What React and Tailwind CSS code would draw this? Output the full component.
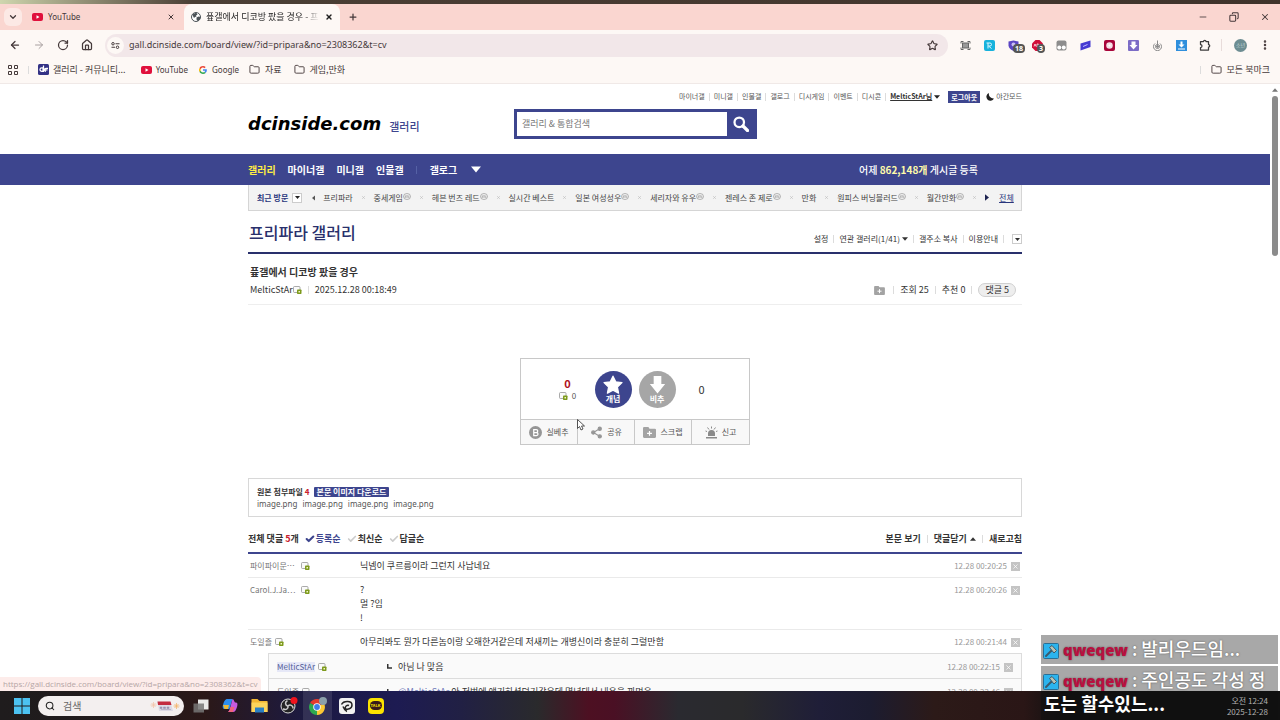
import { Fragment } from 'react';
import {
  ArrowLeft,
  ArrowRight,
  Check,
  ChevronDown,
  Copy,
  EllipsisVertical,
  Folder,
  House,
  Minus,
  Plus,
  RotateCw,
  Search,
  Share2,
  Star,
  X,
} from 'lucide-react';

const utilLinks = ['마이너갤', '미니갤', '인물갤', '갤로그', '디시게임', '이벤트', '디시콘'];

const visited = [
  { name: '프리파라' },
  { name: '중세게임', minor: true },
  { name: '헤븐 번즈 레드', minor: true },
  { name: '실시간 베스트' },
  { name: '일본 여성성우', minor: true },
  { name: '세리자와 유우', minor: true },
  { name: '젠레스 존 제로', minor: true },
  { name: '만화' },
  { name: '원피스 버닝블러드', minor: true },
  { name: '월간만화', minor: true },
];

const comments = [
  { name: '파이파이문⋯', lines: ['닉넴이 쿠르릉이라 그런지 사납네요'], date: '12.28 00:20:25' },
  { name: 'Carol.J.Ja⋯', lines: ['?', '멀 ?임', '!'], date: '12.28 00:20:26' },
  {
    name: '도일즐',
    lines: ['아무리봐도 뭔가 다른놈이랑 오해한거같은데 저새끼는 개병신이라 충분히 그럴만함'],
    date: '12.28 00:21:44',
  },
];

const replies = [
  { name: 'MelticStAr', mine: true, text: '아님 나 맞음', date: '12.28 00:22:15' },
  {
    name: '도일즐',
    mention: '@MelticStAr',
    text: '아 저번에 얘기하셨던거같은데 몇년대서 내용을 까먹음',
    date: '12.28 00:22:46',
  },
];

const YoutubeIcon = () => (
  <svg viewBox="0 0 22 16" className="w-[11px] h-2 shrink-0">
    <rect width="22" height="16" rx="4" fill="#e0103c" />
    <path d="M9 4.5v7l6-3.5z" fill="#fff" />
  </svg>
);

const GlobeIcon = () => (
  <svg viewBox="0 0 20 20" className="w-[10px] h-[10px] shrink-0">
    <circle cx="10" cy="10" r="9" fill="#fff" stroke="#4b5256" strokeWidth="2" />
    <path d="M3 6c2-3 5-4 8-4l2 3-3 2 1 2-3 1-2 2zM11 11l4-2 4 1c0 4-3 7-6 8l-2-3z" fill="#4b5256" />
  </svg>
);

const GoogleIcon = () => (
  <svg viewBox="0 0 48 48" className="w-2 h-2 shrink-0">
    <path fill="#ea4335" d="M24 9.5c3.5 0 6.700 1.200 9.200 3.600l6.900-6.900C35.900 2.400 30.500 0 24 0 14.600 0 6.500 5.400 2.600 13.200l8 6.200C12.400 13.700 17.700 9.500 24 9.500z" />
    <path fill="#4285f4" d="M47 24.500c0-1.600-.2-3.100-.4-4.500H24v9h12.900c-.6 3-2.300 5.500-4.800 7.200l7.700 6C44.400 38 47 31.800 47 24.500z" />
    <path fill="#fbbc05" d="M10.500 28.600a14.500 14.500 0 0 1 0-9.200l-8-6.200a24 24 0 0 0 0 21.600z" />
    <path fill="#34a853" d="M24 48c6.500 0 11.900-2.100 15.900-5.800l-7.700-6c-2.200 1.500-4.900 2.300-8.200 2.300-6.300 0-11.600-4.200-13.500-9.900l-8 6.200C6.500 42.600 14.600 48 24 48z" />
  </svg>
);

// grey bubble with the small green badge next to member names
const MemberIcon = () => (
  <svg viewBox="0 0 18 16" className="w-[9px] h-2 shrink-0">
    <rect x="1" y="1" width="13" height="12" rx="2" fill="#fafafa" stroke="#8f8f8f" strokeWidth="1.500" />
    <rect x="8" y="7" width="9" height="9" rx="1.500" fill="#7d9a1c" />
    <rect x="11" y="10" width="3" height="3" fill="#f2f6c8" />
  </svg>
);

const FolderPlusIcon = ({ className }) => (
  <svg viewBox="0 0 24 20" className={className}>
    <path d="M2 0h8l2 3h10a2 2 0 0 1 2 2v13a2 2 0 0 1-2 2H2a2 2 0 0 1-2-2V2a2 2 0 0 1 2-2z" fill="#a3a3a3" />
    <path d="M12 7v9M7.500 11.500h9" stroke="#fff" strokeWidth="2.200" />
  </svg>
);

const Triangle = ({ className, d }) => (
  <svg viewBox="0 0 10 6" className={className} fill="currentColor">
    <path d={d || 'M0 0h10L5 6z'} />
  </svg>
);

const Bar = ({ className = 'mx-1' }) => <span className={`w-px h-2 bg-[#dcdcdc] shrink-0 ${className}`} />;

const Extensions = () => (
  <div className="flex items-center">
    <button className="w-6 flex justify-center" aria-label="Capture">
      <svg viewBox="0 0 22 22" className="w-[11px] h-[11px]" fill="none" stroke="#666" strokeWidth="2">
        <path d="M2 7V3h5M15 3h5v4M2 15v4h5M15 19h5v-4" />
        <rect x="5" y="6" width="12" height="10" fill="#999" />
      </svg>
    </button>
    <button className="w-6 flex justify-center" aria-label="Ridi">
      <svg viewBox="0 0 22 22" className="w-[11px] h-[11px]">
        <rect width="22" height="22" rx="4" fill="#17b2dc" />
        <path d="M8 17V6h4a3 3 0 0 1 0 6H9l6 5M5 6h3" stroke="#d9f6ff" strokeWidth="2" fill="none" />
      </svg>
    </button>
    <button className="w-6 flex justify-center relative" aria-label="Shield">
      <svg viewBox="0 0 22 22" className="w-[11px] h-[11px]">
        <path d="M1 3l10-2 10 2v8c0 5-5 9-10 11C6 20 1 16 1 11z" fill="#5b45c4" />
        <circle cx="11" cy="9" r="4" fill="#c9bff5" />
      </svg>
      <span className="absolute left-3 top-1 px-0.5 rounded-sm bg-[#555] text-white font-bold text-[7px] leading-[9px]">18</span>
    </button>
    <button className="w-6 flex justify-center relative" aria-label="Ad block">
      <svg viewBox="0 0 22 22" className="w-[11px] h-[11px]">
        <path d="M7 0h8l7 7v8l-7 7H7l-7-7V7z" fill="#d0103a" />
        <path d="M4 13l2-5 2 5M10 8v6h2a1.500 1.500 0 0 0 0-3 1.500 1.500 0 0 0 0-3zM18 9h-2v4h2" stroke="#fff" strokeWidth="1.500" fill="none" />
      </svg>
      <span className="absolute left-3 top-1 px-0.5 rounded-sm bg-[#555] text-white font-bold text-[7px] leading-[9px]">3</span>
    </button>
    <button className="w-6 flex justify-center" aria-label="Tampermonkey">
      <svg viewBox="0 0 22 22" className="w-[11px] h-[11px]">
        <rect x="1" y="1" width="20" height="20" rx="4" fill="#8d8d8d" />
        <circle cx="6.500" cy="15" r="4" fill="#fff" />
        <circle cx="15.500" cy="15" r="4" fill="#fff" />
      </svg>
    </button>
    <button className="w-6 flex justify-center" aria-label="Note">
      <svg viewBox="0 0 22 22" className="w-[11px] h-[11px]">
        <path d="M1 7l20-6v13L1 21z" fill="#473bd2" />
        <path d="M6 13l9-4" stroke="#c4bfff" strokeWidth="2" />
      </svg>
    </button>
    <button className="w-6 flex justify-center" aria-label="Record">
      <svg viewBox="0 0 22 22" className="w-[11px] h-[11px]">
        <rect width="22" height="22" rx="4" fill="#a8063a" />
        <circle cx="11" cy="11" r="6.500" fill="#f6dfe6" />
        <circle cx="11" cy="11" r="2" fill="#fff" />
      </svg>
    </button>
    <button className="w-6 flex justify-center" aria-label="Download">
      <svg viewBox="0 0 22 22" className="w-[11px] h-[11px]">
        <rect width="22" height="22" rx="2" fill="#7c6cc6" />
        <path d="M7 3h8v7h4l-8 9-8-9h4z" fill="#fff" />
      </svg>
    </button>
    <button className="w-6 flex justify-center" aria-label="Save">
      <svg viewBox="0 0 22 22" className="w-[11px] h-[11px]" fill="none" stroke="#8a8a8a" strokeWidth="2">
        <path d="M11 1v14M7 11l4 4 4-4M6 7a8 8 0 1 0 10 0" />
        <circle cx="11" cy="13" r="4" />
      </svg>
    </button>
    <button className="w-6 flex justify-center" aria-label="Image downloader">
      <svg viewBox="0 0 22 22" className="w-[11px] h-[11px]">
        <rect width="22" height="22" fill="#2f8fdc" />
        <path d="M9 3h4v6h4l-6 6-6-6h4zM4 17h14v2H4z" fill="#fff" />
      </svg>
    </button>
    <button className="w-6 flex justify-center" aria-label="Extensions">
      <svg viewBox="0 0 24 24" className="w-3 h-3" fill="none" stroke="#3c3c3c" strokeWidth="2.500" strokeLinejoin="round">
        <path d="M3 5h6a2.500 2.500 0 0 1 5 0h5v6a2.500 2.500 0 0 1 0 5v6H3v-5a3 3 0 0 0 0-6z" />
      </svg>
    </button>
  </div>
);

const Browser = () => (
  <header className="shrink-0 font-['Noto_Sans','Noto_Sans_CJK_KR',sans-serif] text-[#45393a]">
    <div className="h-1 bg-linear-to-r from-[#cfd6ae] via-[#4b3f35] via-[15%] to-[#3f332b]" />
    <div className="h-[26px] bg-[#fad6d0] flex items-center pl-1">
      <button className="w-[18px] h-[18px] rounded-md bg-[#fce9e5] flex items-center justify-center" aria-label="Tabs">
        <ChevronDown className="w-2.5 h-2.5" strokeWidth={3} />
      </button>
      <div className="w-[162px] pl-2.5 pr-[9px] flex items-center gap-[5px] text-[8px]">
        <YoutubeIcon />
        <span className="flex-1">YouTube</span>
        <button aria-label="Close tab"><X className="w-2 h-2" strokeWidth={3} /></button>
      </div>
      <div className="w-[156px] h-full pl-[7px] pr-[7px] flex items-center gap-[5px] text-[9px] rounded-t-lg bg-[#fdf8f5] text-[#1f1f1f]">
        <GlobeIcon />
        <span className="flex-1 overflow-hidden whitespace-nowrap font-['Noto_Sans_CJK_KR',sans-serif] mask-r-from-85%">픂갤에서 디코방 팠을 경우 - 프</span>
        <button aria-label="Close tab"><X className="w-2 h-2" strokeWidth={4} /></button>
      </div>
      <button className="ml-2 w-2.5" aria-label="New tab"><Plus className="w-2.5 h-2.5" strokeWidth={3} /></button>
      <div className="ml-auto flex items-center gap-[21px] pr-2.5">
        <button aria-label="Minimize"><Minus className="w-2.5 h-2.5" /></button>
        <button aria-label="Restore"><Copy className="w-2.5 h-2.5 -scale-x-100" strokeWidth={2.5} /></button>
        <button aria-label="Close"><X className="w-2.5 h-2.5" strokeWidth={2.5} /></button>
      </div>
    </div>
    <div className="h-[30px] bg-[#fdf8f5] flex items-center pl-[9px] pr-[9px]">
      <div className="flex items-center gap-3">
        <button aria-label="Back"><ArrowLeft className="w-3 h-3" strokeWidth={2.5} /></button>
        <button aria-label="Forward"><ArrowRight className="w-3 h-3 text-[#a8a0a0]" /></button>
        <button aria-label="Reload"><RotateCw className="w-3 h-3" strokeWidth={2.5} /></button>
        <button aria-label="Home"><House className="w-3 h-3" strokeWidth={2.5} /></button>
      </div>
      <label className="ml-3 flex-1 h-[23px] rounded-full bg-[#f2e7e9] flex items-center pl-0.5 pr-2.5">
        <span className="w-[17px] h-[17px] rounded-full bg-[#fdf8f5] flex items-center justify-center">
          <svg viewBox="0 0 18 14" className="w-[9px] h-[7px]" fill="none" stroke="#453a3b" strokeWidth="2">
            <circle cx="4" cy="3.500" r="2.500" />
            <path d="M9 3.500h8M1 10.500h7" />
            <circle cx="13" cy="10.500" r="2.500" />
          </svg>
        </span>
        <input
          aria-label="Address"
          className="ml-[5px] flex-1 min-w-0 bg-transparent text-[9px] outline-none"
          defaultValue="gall.dcinside.com/board/view/?id=pripara&no=2308362&t=cv"
        />
        <Star className="w-[11px] h-[11px]" strokeWidth={2.5} />
      </label>
      <div className="ml-[5px] flex items-center">
        <Extensions />
        <span className="ml-1 mr-3 w-px h-3 bg-[#e8dcda]" />
        <span className="w-[13px] h-[13px] rounded-full bg-[#6d8d92] text-[#c3d8da] text-[5px] leading-[13px] text-center">소년</span>
        <EllipsisVertical className="ml-3 w-3 h-3" strokeWidth={3} />
      </div>
    </div>
    <nav className="h-6 bg-[#fdf8f5] border-b border-[#f0e9e7] flex items-center pl-2 pr-2.5 pb-1 text-[8px]">
      <svg viewBox="0 0 20 20" className="w-2.5 h-2.5" fill="none" stroke="#453a3b" strokeWidth="2">
        <path d="M1 1h6v6H1zM13 1h6v6h-6zM1 13h6v6H1zM13 13h6v6h-6z" />
      </svg>
      <Bar className="ml-2.5 mr-[9px]" />
      <a href="#" className="flex items-center gap-1 mr-[15px] font-['Noto_Sans_CJK_KR',sans-serif] text-[9px]">
        <svg viewBox="0 0 22 22" className="w-[11px] h-[11px]">
          <rect width="22" height="22" rx="3" fill="#333285" />
          <path d="M10 7.500H7.500a3.500 3.500 0 0 0 0 7H10zM11 3v13M20 8.500h-4a3 3 0 0 0 0 6M14 11.500h5" stroke="#fff" strokeWidth="2.500" fill="none" />
        </svg>
        갤러리 - 커뮤니티...
      </a>
      <a href="#" className="flex items-center gap-1 mr-[11px]"><YoutubeIcon />YouTube</a>
      <a href="#" className="flex items-center gap-[5px] mr-2.5"><GoogleIcon />Google</a>
      <a href="#" className="flex items-center gap-[5px] mr-3 font-['Noto_Sans_CJK_KR',sans-serif] text-[9px]"><Folder className="w-[11px] h-[11px]" />자료</a>
      <a href="#" className="flex items-center gap-[5px] font-['Noto_Sans_CJK_KR',sans-serif] text-[9px]"><Folder className="w-[11px] h-[11px]" />게임,만화</a>
      <Bar className="ml-auto mr-2.5" />
      <a href="#" className="flex items-center gap-[5px] font-['Noto_Sans_CJK_KR',sans-serif] text-[9px]"><Folder className="w-[11px] h-[11px]" />모든 북마크</a>
    </nav>
  </header>
);

const SiteHeader = () => (
  <>
    <div className="w-[774px] max-w-full mx-auto h-[70px]">
      <div className="h-[25px] flex items-center justify-end text-[7px] text-[#555]">
        {utilLinks.map((link) => (
          <Fragment key={link}>
            <a href="#">{link}</a>
            <Bar className="mx-1" />
          </Fragment>
        ))}
        <a href="#" className="font-bold underline text-[#333] text-[7px]">MelticStAr님</a>
        <Triangle className="ml-0.5 w-1.5 h-1 text-[#222]" />
        <button className="ml-2 w-8 h-3 bg-[#3d458e] text-white font-bold leading-3">로그아웃</button>
        <svg viewBox="0 0 16 16" className="ml-1.5 mr-0.5 w-2 h-2">
          <path d="M6 0a8 8 0 1 0 10 11A9 9 0 0 1 6 0z" fill="#222" />
        </svg>
        <a href="#">야간모드</a>
      </div>
      <div className="flex items-center">
        <h1 className="w-[266px] flex items-center gap-2">
          <a href="#" className="font-['DejaVu_Sans',sans-serif] font-bold italic text-[18px] leading-6 text-black">dcinside.com</a>
          <a href="#" className="mt-1 text-[11px] text-[#3d458e] font-medium">갤러리</a>
        </h1>
        <form className="w-[243px] h-[30px] flex border-[3px] border-[#3d458e] bg-[#3d458e]" onSubmit={(e) => e.preventDefault()}>
          <input
            type="text"
            aria-label="갤러리 & 통합검색"
            placeholder="갤러리 & 통합검색"
            className="flex-1 min-w-0 bg-white pl-[5px] text-[9px] placeholder:text-[#777] outline-none"
          />
          <button className="w-[27px] flex items-center justify-center text-white" aria-label="검색">
            <svg viewBox="0 0 32 32" className="w-4 h-4" fill="none" stroke="currentColor">
              <circle cx="12.500" cy="12.500" r="9.500" strokeWidth="4.500" />
              <path d="M20 20l9 9" strokeWidth="6.500" strokeLinecap="round" />
            </svg>
          </button>
        </form>
      </div>
    </div>
    <nav className="h-[31px] bg-[#3d458e]">
      <div className="w-[774px] max-w-full mx-auto h-full flex items-center text-[10px] font-bold text-white">
        <a href="#" className="text-[#ffed44] mr-3">갤러리</a>
        <a href="#" className="mr-3">마이너갤</a>
        <a href="#" className="mr-3">미니갤</a>
        <a href="#">인물갤</a>
        <span className="ml-3 mr-[13px] w-px h-2 bg-[#5561a5]" />
        <a href="#">갤로그</a>
        <button className="ml-3.5" aria-label="더보기"><Triangle className="w-2.5 h-[7px]" /></button>
        <p className="ml-auto mr-11 font-medium">
          어제 <b className="text-[#fffbaa]">862,148개</b> 게시글 등록
        </p>
      </div>
    </nav>
    <div className="w-[774px] max-w-full mx-auto h-[26px] flex items-center justify-between pl-2 pr-[7px] bg-[#f3f3f3] border border-t-0 border-[#d5d5d5] text-[8px] text-[#444] whitespace-nowrap">
      <div className="flex items-center">
        <b className="text-[#29367c]">최근 방문</b>
        <button className="ml-1 w-2.5 h-2.5 bg-white border border-[#ccc] flex items-center justify-center" aria-label="열기">
          <Triangle className="w-[5px] h-[3px] text-[#222]" />
        </button>
        <svg viewBox="0 0 6 10" className="w-[3px] h-[6px] ml-2.5"><path d="M6 0v10L0 5z" fill="#555" /></svg>
      </div>
      {visited.map((item) => (
        <Fragment key={item.name}>
          <a href="#" className="flex items-center">
            {item.name}
            {item.minor && (
              <svg viewBox="0 0 16 14" className="w-2 h-[7px] mb-0.5" fill="none" stroke="#888" strokeWidth="1.200">
                <ellipse cx="8" cy="7" rx="7" ry="6" />
                <path d="M4.500 10V5.500M4.500 6.500c1-1.500 3-1.500 3.500 0V10M8 6.500c1-1.500 3-1.500 3.500 0V10" />
              </svg>
            )}
          </a>
          <X className="w-[5px] h-[5px] text-[#aaa]" />
        </Fragment>
      ))}
      <div className="flex items-center gap-2.5">
        <svg viewBox="0 0 6 10" className="w-1 h-[7px]"><path d="M0 0v10l6-5z" fill="#1d2350" /></svg>
        <a href="#" className="underline text-[#29367c]">전체</a>
      </div>
    </div>
  </>
);

const VoteBox = () => (
  <section className="mt-[53px] mx-auto w-[230px] border border-[#c8c8c8]">
    <div className="h-[60px] flex items-center justify-center">
      <div className="w-[30px] text-center">
        <p className="text-[11px] leading-[14px] font-bold text-[#b0101c]">0</p>
        <p className="flex items-center justify-center gap-1 text-[8px] leading-3 text-[#555]"><MemberIcon />0</p>
      </div>
      <button className="ml-3 w-[37px] h-[37px] rounded-full bg-[#3d458e] text-white text-[8px] leading-[10px] font-bold flex flex-col items-center pt-1">
        <svg viewBox="0 0 24 22" className="w-5 h-[19px]" fill="#fff" stroke="#fff" strokeWidth="1.500" strokeLinejoin="round">
          <path d="M12 1l3.300 6.800 7.500 1-5.500 5.200 1.400 7.300L12 17.700 5.300 21.300 6.700 14 1.200 8.800l7.500-1z" />
        </svg>
        개념
      </button>
      <button className="ml-[7px] w-[37px] h-[37px] rounded-full bg-[#a6a6a6] text-white text-[8px] leading-[10px] font-bold flex flex-col items-center pt-1">
        <svg viewBox="0 0 20 22" className="w-[17px] h-[19px]" fill="#fff">
          <path d="M5.500 1h9v9.500H19L10 21.500 1 10.500h4.500z" />
        </svg>
        비추
      </button>
      <p className="ml-2.5 w-8 text-center text-[11px] text-[#333]">0</p>
    </div>
    <div className="h-[25px] border-t border-[#c8c8c8] bg-[#f8f8f8] grid grid-cols-4 divide-x divide-[#c8c8c8] text-[8px] text-[#555]">
      <button className="flex items-center justify-center gap-1">
        <svg viewBox="0 0 26 26" className="w-[13px] h-[13px]">
          <circle cx="13" cy="13" r="13" fill="#969696" />
          <path d="M9.500 7h5a3 3 0 0 1 0 6h-5zM9.500 13h5.500a3 3 0 0 1 0 6H9.500z" fill="none" stroke="#fff" strokeWidth="2.500" />
        </svg>
        실베추
      </button>
      <button className="flex items-center justify-center gap-1">
        <Share2 className="w-[13px] h-[13px] text-[#969696]" fill="currentColor" />
        공유
      </button>
      <button className="flex items-center justify-center gap-1">
        <FolderPlusIcon className="w-[13px] h-[11px]" />
        스크랩
      </button>
      <button className="flex items-center justify-center gap-1">
        <svg viewBox="0 0 26 26" className="w-[13px] h-[13px]" fill="#8a8a8a" stroke="#8a8a8a">
          <path d="M6 20v-5a7 7 0 0 1 14 0v5zM2 22h22v3H2z" stroke="none" />
          <path d="M13 1v4M5 3l3 4M21 3l-3 4M1 10l3 1M25 10l-3 1" fill="none" strokeWidth="2" />
        </svg>
        신고
      </button>
    </div>
  </section>
);

const DeleteButton = () => (
  <button className="ml-1 w-[9px] h-[9px] bg-[#c4c4c4] text-white flex items-center justify-center" aria-label="삭제">
    <X className="w-[7px] h-[7px]" strokeWidth={2.5} />
  </button>
);

const Comments = () => (
  <section className="mt-4">
    <div className="pb-[7px] flex items-center text-[9px] leading-3 font-bold text-[#333] border-b-2 border-[#3d458e]">
      <h3>전체 댓글 <span className="text-[#c8202c]">5</span>개</h3>
      <button className="ml-1.5 flex items-center text-[#3d458e]"><Check className="w-2.5 h-2.5 mr-px" strokeWidth={5} />등록순</button>
      <button className="ml-1.5 flex items-center"><Check className="w-2.5 h-2.5 mr-px text-[#ccc]" strokeWidth={4} />최신순</button>
      <button className="ml-1.5 flex items-center"><Check className="w-2.5 h-2.5 mr-px text-[#ccc]" strokeWidth={4} />답글순</button>
      <a href="#" className="ml-auto">본문 보기</a>
      <Bar className="mx-1.5" />
      <button className="flex items-center gap-[3px]">댓글닫기<Triangle className="w-1.5 h-1" d="M0 6h10L5 0z" /></button>
      <Bar className="mx-1.5" />
      <button>새로고침</button>
    </div>
    <ul className="text-[9px] leading-[14px] text-[#333]">
      {comments.map((comment, i) => (
        <li key={comment.date} className={`flex items-start pt-[5px] pb-1 pl-0.5 pr-0.5 ${i < 2 ? 'border-b border-[#eaeaea]' : ''}`}>
          <div className="w-[110px] h-3.5 flex items-center text-[8px] text-[#777]">
            <span className={i < 2 ? 'w-[51px]' : 'mr-[3px]'}>{comment.name}</span>
            <MemberIcon />
          </div>
          <div className="flex-1">
            {comment.lines.map((line) => <p key={line}>{line}</p>)}
          </div>
          <div className="h-3.5 flex items-center text-[8px] text-[#999]">{comment.date}<DeleteButton /></div>
        </li>
      ))}
    </ul>
    <ul className="ml-5 border-x border-[#dcdcdc] bg-[#fafafa] text-[9px] leading-[14px] text-[#333]">
      {replies.map((reply) => (
        <li key={reply.date} className="flex items-start border-t border-[#dcdcdc] pt-1.5 pb-1 pl-2 pr-2">
          <div className="w-[110px] h-3.5 flex items-center gap-[3px] text-[8px] text-[#777]">
            <span className={reply.mine ? 'bg-[#e6e8f7] text-[#555f9a] leading-[10px]' : ''}>{reply.name}</span>
            <MemberIcon />
          </div>
          <svg viewBox="0 0 10 10" className="mt-1 mr-1.5 w-[5px] h-[5px]"><path d="M1.500 0v8H10" fill="none" stroke="#333" strokeWidth="3" /></svg>
          <p className="flex-1">
            {reply.mention && <span className="text-[#6d78b8]">{reply.mention} </span>}
            {reply.text}
          </p>
          <div className="h-3.5 flex items-center text-[8px] text-[#999]">{reply.date}<DeleteButton /></div>
        </li>
      ))}
    </ul>
  </section>
);

const Article = () => (
  <main className="w-[774px] max-w-full mx-auto">
    <div className="h-[43px] flex items-end justify-between border-b-2 border-[#29306c] pb-1.5">
      <h2 className="pl-px pb-0.5 text-[16px] leading-6 font-medium text-[#29306c]">프리파라 갤러리</h2>
      <div className="h-3.5 flex items-center text-[8px] text-[#333]">
        <button>설정</button>
        <Bar className="mx-[5px]" />
        <button className="flex items-center gap-0.5">연관 갤러리(1/41)<Triangle className="w-1.5 h-1" /></button>
        <Bar className="mx-[5px]" />
        <button>갤주소 복사</button>
        <Bar className="mx-[5px]" />
        <button>이용안내</button>
        <Bar className="ml-[5px] mr-2" />
        <button className="w-2.5 h-2.5 border border-[#ccc] flex items-center justify-center" aria-label="펼치기">
          <Triangle className="w-[5px] h-[3px]" />
        </button>
      </div>
    </div>
    <div className="pt-2.5 pb-1.5 pl-0.5 pr-1.5 border-b border-[#eee]">
      <h3 className="text-[10px] leading-4 font-bold text-[#333]">픂갤에서 디코방 팠을 경우</h3>
      <div className="mt-0.5 h-4 flex items-center text-[9px] text-[#333]">
        <span>MelticStAr</span>
        <MemberIcon />
        <Bar className="mx-1.5" />
        <time>2025.12.28 00:18:49</time>
        <button className="ml-auto" aria-label="스크랩"><FolderPlusIcon className="w-[11px] h-[9px]" /></button>
        <Bar className="ml-2 mr-1.5" />
        <span>조회 25</span>
        <Bar className="mx-1.5" />
        <span>추천 0</span>
        <Bar className="mx-1.5" />
        <a href="#" className="px-1.5 h-3.5 leading-3 rounded-full border border-[#d0d0d0] bg-[#eee]">댓글 5</a>
      </div>
    </div>
    <VoteBox />
    <section className="mt-[33px] pt-[7px] pb-1.5 pl-2 border border-[#d8d8d8] leading-3 text-[8px]">
      <div className="flex items-center gap-1">
        <b className="text-[#333]">원본 첨부파일 <span className="text-[#c8202c]">4</span></b>
        <button className="px-[3px] h-2.5 leading-2.5 rounded-[1px] bg-[#3d458e] text-white font-bold">본문 이미지 다운로드</button>
      </div>
      <div className="flex gap-[5px] text-[#555] font-['Noto_Sans',sans-serif]">
        <a href="#">image.png</a>
        <a href="#">image.png</a>
        <a href="#">image.png</a>
        <a href="#">image.png</a>
      </div>
    </section>
    <Comments />
  </main>
);

const Taskbar = () => (
  <footer className="h-[29px] shrink-0 flex items-center pl-3.5 pr-3 bg-[linear-gradient(90deg,#1f1c1d_0%,#211a1c_10%,#2b1818_16%,#1c1a42_24%,#1d1b52_31%,#212044_36%,#2a2a2c_42%,#4d1022_46%,#4a1024_48%,#2a2a30_53%,#2a2a2c_58%,#1f1e38_64%,#1c1c30_68%,#2c1a18_73%,#2a1616_80%,#111_83%,#111_100%)]">
    <button aria-label="시작">
      <svg viewBox="0 0 16 16" className="w-4 h-4" fill="#4cc2f1"><path d="M0 0h7.500v7.500H0zM8.500 0H16v7.500H8.500zM0 8.500h7.500V16H0zM8.500 8.500H16V16H8.500z" /></svg>
    </button>
    <label className="ml-2 w-[146px] h-5 rounded-full bg-[#f3efef] flex items-center pl-[7px] pr-1">
      <Search className="w-2.5 h-2.5 text-[#222] shrink-0" strokeWidth={2.5} />
      <input type="text" placeholder="검색" aria-label="검색" className="ml-2 flex-1 min-w-0 text-[10px] placeholder:text-[#666] outline-none" />
      <svg viewBox="0 0 60 28" className="w-[30px] h-3.5">
        <path d="M7 6v12M1 12h12M3 8l8 8M11 8l-8 8" stroke="#f3c3a8" strokeWidth="1.500" />
        <path d="M53 8v12M47 14h12M49 10l8 8M57 10l-8 8" stroke="#f3b36a" strokeWidth="1.500" />
        <path d="M16 10h26l4 14H18z" fill="#dcd9e4" />
        <path d="M15 5h26l2 7H16z" fill="#c32c40" />
        <path d="M20 16h4v3h-4zM27 16h4v3h-4zM34 16h4v3h-4zM22 21h20" fill="#9a94b0" stroke="#9a94b0" />
      </svg>
    </label>
    <div className="ml-[2px] flex items-center">
      <button className="w-[29px] flex justify-center" aria-label="작업 보기">
        <svg viewBox="0 0 32 28" className="w-4 h-3.5"><path d="M10 1h21v20H10z" fill="#e9e9e9" /><path d="M1 9h21v18H1z" fill="#777" fillOpacity=".85" /></svg>
      </button>
      <button className="w-[30px] flex justify-center" aria-label="Copilot">
        <svg viewBox="0 0 32 30" className="w-4 h-[15px]">
          <path d="M11 2h10l-6 20H5c-4 0-4-5-3-8C4 7 6 2 11 2z" fill="#2b8df0" />
          <path d="M2 14l3 8h7l2-8z" fill="#eab83a" />
          <path d="M21 2c3 0 3 5 5 7h2c4 0 3 6 2 9-2 6-4 10-8 10H12c4-2 5-12 9-26z" fill="#c65be0" />
          <path d="M12 28c3-2 4-6 5-10h8l-3 10z" fill="#f0637c" />
        </svg>
      </button>
      <button className="w-[29px] flex justify-center" aria-label="탐색기">
        <svg viewBox="0 0 34 30" className="w-[17px] h-[15px]">
          <path d="M1 2h12l4 4h16v22H1z" fill="#f2b632" /><path d="M1 9h32v19H1z" fill="#fbd35b" /><path d="M8 19h18v10H8z" fill="#2a7fc4" />
        </svg>
      </button>
      <button className="w-[29px] flex justify-center" aria-label="OBS">
        <svg viewBox="0 0 36 34" className="w-[18px] h-[17px]">
          <circle cx="16" cy="18" r="14" fill="#232323" stroke="#ddd" strokeWidth="2" />
          <path d="M15 18c-5-2-5-8-1-10M16 18c4-4 10-1 10 4M16 18c1 5-4 9-9 6" fill="none" stroke="#ccc" strokeWidth="3" strokeLinecap="round" />
          <circle cx="28" cy="7" r="7" fill="#f0131d" />
        </svg>
      </button>
      <button className="w-[29px] h-[29px] flex items-center justify-center bg-white/10" aria-label="Chrome">
        <svg viewBox="0 0 36 36" className="w-[18px] h-[18px]">
          <path d="M16 20L2.200 12A16 16 0 0 1 29.800 12z" fill="#e33b2e" />
          <path d="M16 20L2.200 12A16 16 0 0 0 16 36z" fill="#2da94f" />
          <path d="M16 20h0l0 16A16 16 0 0 0 29.800 12z" fill="#fcc934" />
          <circle cx="16" cy="20" r="7.500" fill="#fff" /><circle cx="16" cy="20" r="5.800" fill="#3e7de8" />
          <circle cx="28" cy="8" r="8" fill="#8ba0aa" />
        </svg>
      </button>
      <button className="w-[29px] flex justify-center" aria-label="Clip Studio">
        <svg viewBox="0 0 32 32" className="w-4 h-4">
          <rect width="32" height="32" rx="6" fill="#f1f1f1" />
          <path d="M5 13c4-8 21-8 21 1 0 8-10 10-13 7-2-3 3-8 7-6M8 17c2 5 3 8 8 10" fill="none" stroke="#222" strokeWidth="3" />
        </svg>
      </button>
      <button className="w-[29px] flex justify-center" aria-label="카카오톡">
        <span className="w-4 h-4 rounded-sm bg-[#fbe300] flex items-center justify-center">
          <span className="w-3 h-[9px] rounded-full bg-[#391b1b] text-[#fbe300] text-[4px] leading-[9px] font-bold">TALK</span>
        </span>
      </button>
    </div>
    <p className="ml-auto relative z-20 text-right text-[8px] leading-[11px] text-[#b0b0b0] font-['Noto_Sans_CJK_KR',sans-serif]">
      오전 12:24<br />2025-12-28
    </p>
  </footer>
);

const HammerIcon = () => (
  <svg viewBox="0 0 32 32" className="inline-block w-4 h-4 mr-1 align-[-3px]">
    <rect x="1" y="1" width="30" height="30" rx="2" fill="#2bb4ee" stroke="#2a6f95" strokeWidth="2" />
    <path d="M6 26l11-11" stroke="#3b5a6c" strokeWidth="4" strokeLinecap="round" />
    <path d="M13 9l5-4 9 10-5 5z" fill="#b9c4b6" stroke="#3b5a6c" strokeWidth="2" />
  </svg>
);

const ChatLine = ({ children }) => (
  <p className="px-0.5 bg-[#a8a8a8] text-[18px] leading-[27px] font-medium text-white text-shadow-[0_0_2px_#555]">
    <HammerIcon />
    <b className="font-['Noto_Sans',sans-serif] text-[15px] font-black text-[#b8103f]">qweqew</b> : {children}
  </p>
);

const ChatOverlay = () => (
  <aside className="absolute right-0.5 bottom-0 z-10 w-[237px] flex flex-col gap-0.5 whitespace-nowrap">
    <ChatLine>발리우드임...</ChatLine>
    <div>
      <div className="h-[25px] overflow-hidden"><ChatLine>주인공도 각성 정</ChatLine></div>
      <p className="pl-[3px] h-[29px] text-[18px] leading-[25px] font-bold text-white bg-[#111]/60">도는 할수있느...</p>
    </div>
  </aside>
);

const App = () => {
  return (
    <div className="relative h-screen flex flex-col overflow-hidden bg-white font-['Noto_Sans_CJK_KR',sans-serif]">
      <Browser />
      <div className="flex-1 min-h-0 flex relative">
        <div className="flex-1 min-w-0 overflow-hidden">
          <SiteHeader />
          <Article />
        </div>
        <div className="w-2.5 flex flex-col items-center pt-1 pb-0.5 text-[#777]">
          <Triangle className="w-1.5 h-1" d="M0 6h10L5 0z" />
          <span className="mt-1 w-1.5 h-40 rounded-full bg-[#8b8b8b]" />
          <Triangle className="mt-auto w-1.5 h-1" />
        </div>
        <p className="absolute left-0 bottom-0 h-3.5 pl-[3px] pr-1 rounded-tr bg-[#fdecea] text-[8px] leading-3.5 text-[#b5a6a6] font-['Open_Sans',sans-serif]">
          https://gall.dcinside.com/board/view/?id=pripara&no=2308362&t=cv
        </p>
      </div>
      <Taskbar />
      <ChatOverlay />
      <svg viewBox="0 0 16 24" className="absolute left-[577px] top-[419px] w-2 h-3">
        <path d="M1 1v18l4-4 3 7 4-2-3-6h6z" fill="#fff" stroke="#222" strokeWidth="1.500" />
      </svg>
    </div>
  );
};

export default App;
